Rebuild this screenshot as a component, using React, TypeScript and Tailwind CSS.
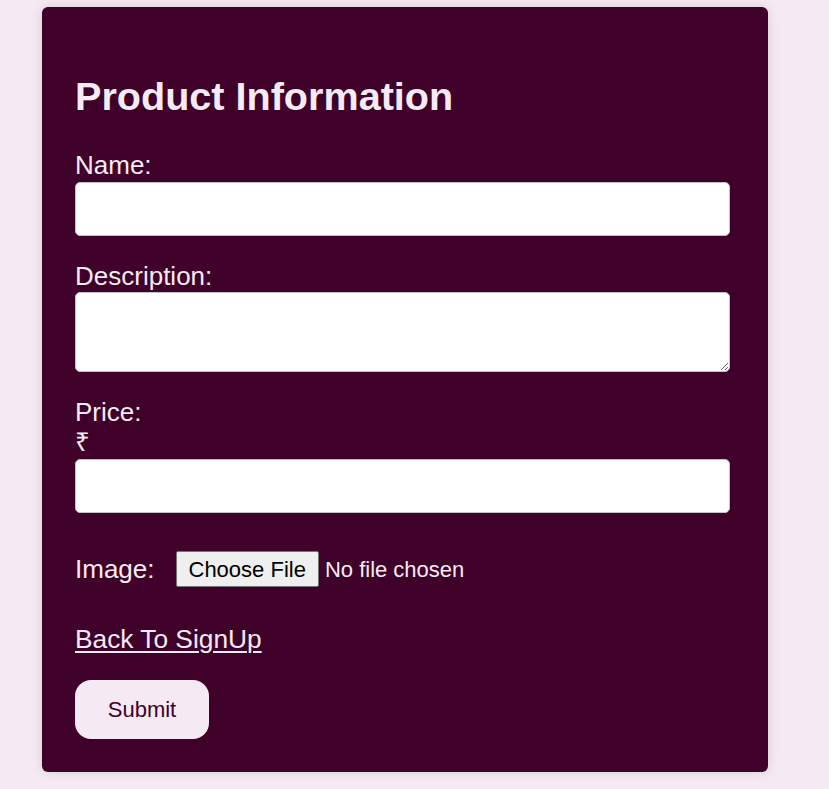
import React from 'react';

export default function App() {
  return (
    <div className="min-h-[789px] w-full bg-[#f5eaf3] font-['Liberation_Sans',Arial,sans-serif] pt-[7px] pb-[17px]">
      <div className="ml-[42px] w-[726px] rounded-[6px] bg-[#3f0029] pl-[33px] pt-[66px] pb-[33px] shadow-[0_0_12px_rgba(0,0,0,0.12)]">
        <h1 className="text-[39.6px] leading-[46px] font-bold text-[#f5ebf3]">Product Information</h1>

        <form className="flex flex-col" onSubmit={(e) => e.preventDefault()}>
          <label className="mt-[31px] block text-[26px] leading-[30px] text-[#f5ebf3]">Name:</label>
          <input
            type="text"
            className="mt-[2px] h-[54px] w-[655px] rounded-[5px] border border-[#c4c4c4] bg-white px-[10px] text-[20px] outline-none"
          />

          <label className="mt-[25px] block text-[26px] leading-[30px] text-[#f5ebf3]">Description:</label>
          <textarea
            className="mt-[1px] block h-[80px] w-[655px] rounded-[5px] border border-[#c4c4c4] bg-white px-[10px] text-[20px] outline-none"
          />

          <label className="mt-[25px] block text-[26px] leading-[30px] text-[#f5ebf3]">Price:</label>
          <span className="block text-[26px] leading-[30px] text-[#f5ebf3]">₹</span>
          <input
            type="number"
            className="mt-[2px] h-[54px] w-[655px] rounded-[5px] border border-[#c4c4c4] bg-white px-[10px] text-[20px] outline-none"
          />

          <div className="mt-[38px] flex h-[36px] items-center">
            <label className="text-[26px] leading-[30px] text-[#f5ebf3]">Image:</label>
            <span className="ml-[21px] flex h-[36px] items-center rounded-[2px] border border-[#767676] bg-[#efefef] px-[12px] text-[22px] text-black">
              Choose File
            </span>
            <span className="ml-[6px] text-[22px] text-[#f5ebf3]">No file chosen</span>
          </div>

          <a href="#" className="mt-[37px] block w-fit text-[26.3px] leading-[30px] text-[#f5ebf3] underline decoration-[1.5px] underline-offset-[3px]">
            Back To SignUp
          </a>

          <button
            type="submit"
            className="mt-[26px] h-[59px] w-[134px] rounded-[16px] bg-[#f5eaf3] text-[22px] text-[#3f0029]"
          >
            Submit
          </button>
        </form>
      </div>
    </div>
  );
}
